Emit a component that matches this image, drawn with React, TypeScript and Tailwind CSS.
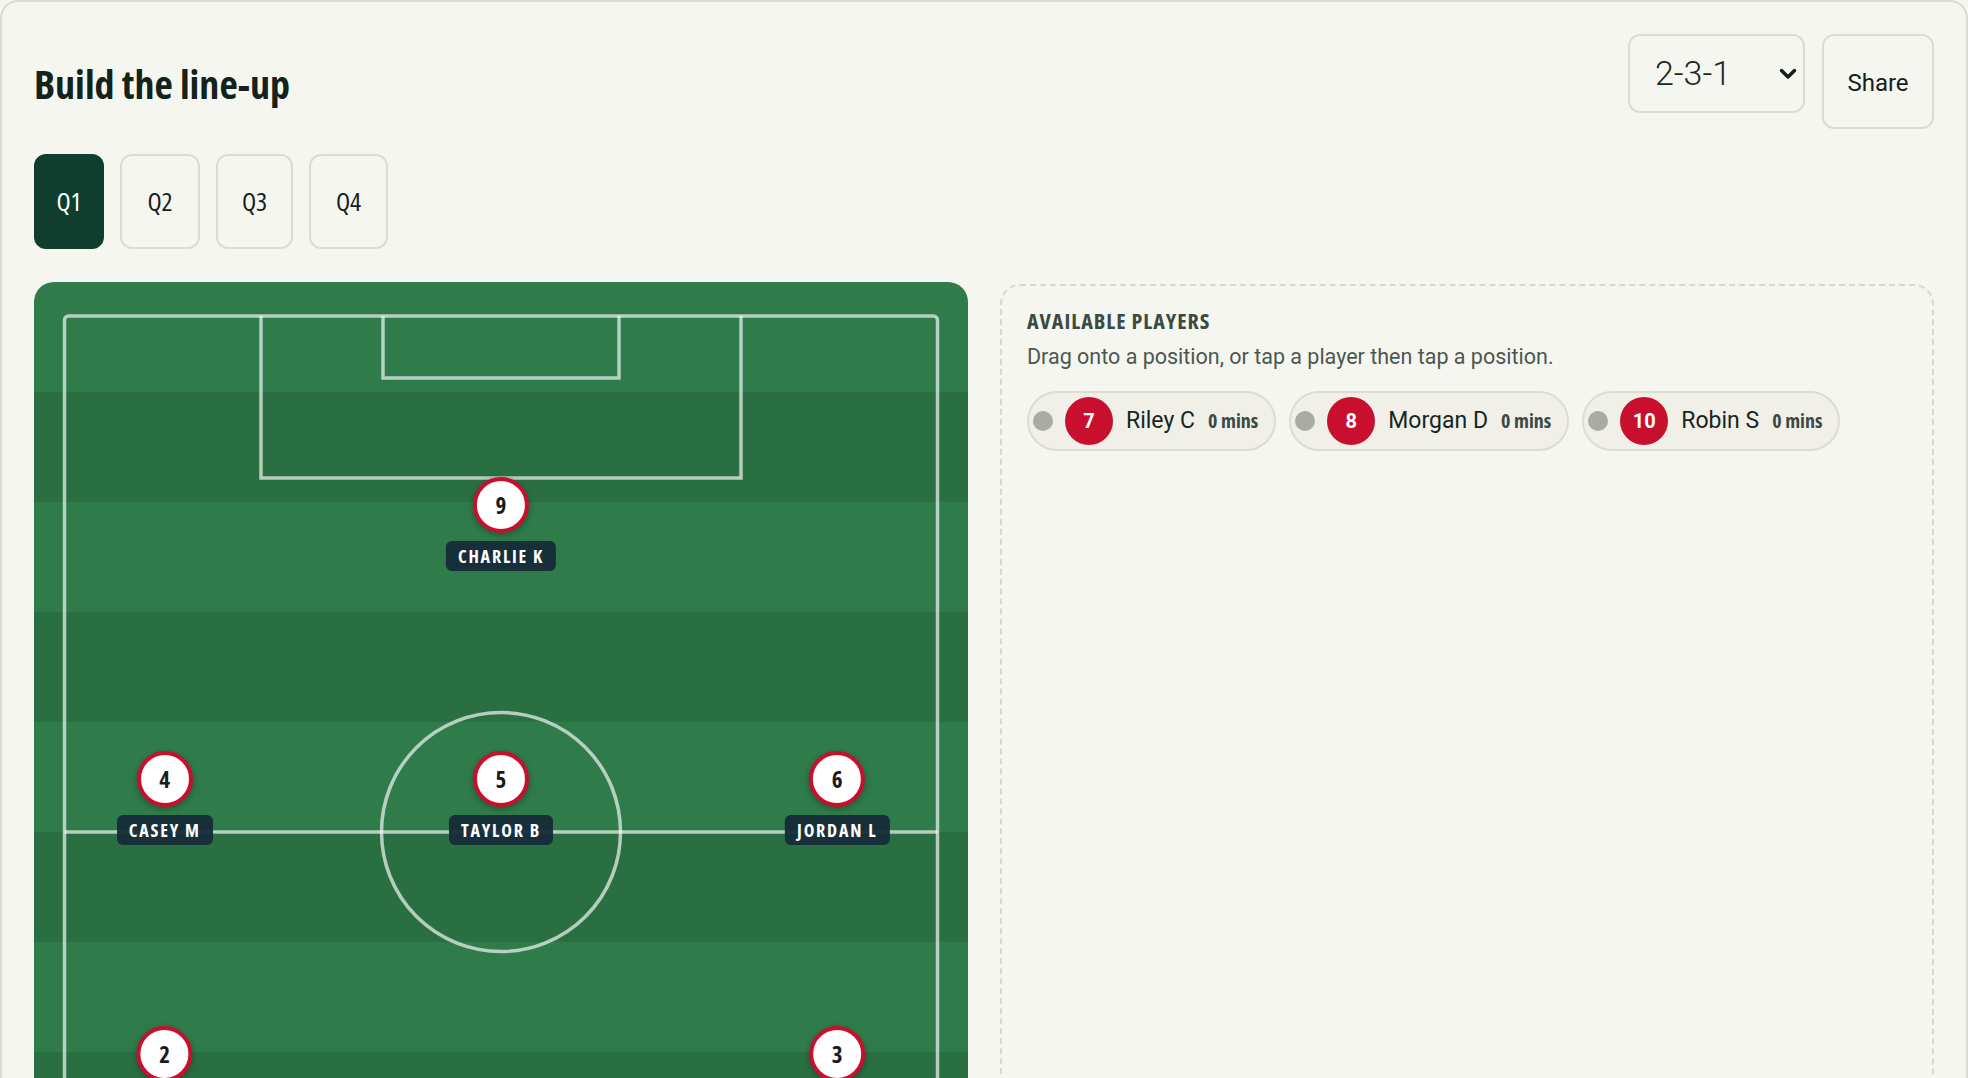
import React from "react";

const COND = "font-['Open_Sans','Liberation_Sans_Narrow',sans-serif] [font-stretch:75%]";
const SANS = "font-['Roboto','Liberation_Sans',sans-serif]";

const tabs = [
  { label: "Q1", w: "w-[70px]", active: true },
  { label: "Q2", w: "w-[80px]", active: false },
  { label: "Q3", w: "w-[77px]", active: false },
  { label: "Q4", w: "w-[79px]", active: false },
];

const players = [
  { n: 9, name: "CHARLIE K", x: 50, y: 20.3 },
  { n: 4, name: "CASEY M", x: 14, y: 45.2 },
  { n: 5, name: "TAYLOR B", x: 50, y: 45.2 },
  { n: 6, name: "JORDAN L", x: 86, y: 45.2 },
  { n: 2, name: "SAM T", x: 14, y: 70.2 },
  { n: 3, name: "JAMIE R", x: 86, y: 70.2 },
  { n: 1, name: "ALEX P", x: 50, y: 90 },
];

const bench = [
  { n: 7, name: "Riley C" },
  { n: 8, name: "Morgan D" },
  { n: 10, name: "Robin S" },
];

const stripes = [0, 1, 2, 3, 4, 5, 6, 7, 8, 9];

function PitchLines() {
  const s = "rgba(255,255,255,0.65)";
  return (
    <svg
      className="absolute inset-0 w-full h-full"
      viewBox="0 0 934 1100"
      preserveAspectRatio="none"
      fill="none"
    >
      <rect x="30.5" y="34" width="873" height="1032" rx="4" stroke={s} strokeWidth="3.5" />
      <path d="M227 34 V196 H707 V34" stroke={s} strokeWidth="3.5" />
      <path d="M349 34 V96 H585 V34" stroke={s} strokeWidth="3.5" />
      <path d="M227 1066 V904 H707 V1066" stroke={s} strokeWidth="3.5" />
      <path d="M349 1066 V1004 H585 V1066" stroke={s} strokeWidth="3.5" />
      <line x1="30.5" y1="550" x2="903.5" y2="550" stroke={s} strokeWidth="3.5" />
      <circle cx="467" cy="550" r="119.5" stroke={s} strokeWidth="3.5" />
    </svg>
  );
}

function Token({ n, name, x, y }: { n: number; name: string; x: number; y: number }) {
  return (
    <div
      className="absolute flex flex-col items-center -translate-x-1/2 -translate-y-[28px]"
      style={{ left: `${x}%`, top: `${y}%` }}
    >
      <div className="w-14 h-14 rounded-full bg-white border-4 border-[#c8102e] flex items-center justify-center shadow-[0_2px_6px_rgba(0,0,0,0.3)]">
        <span className={`${COND} text-[23px] font-bold text-[#1b1b1b] leading-none`}>{n}</span>
      </div>
      <div
        className={`mt-2 h-[30px] px-3 rounded-md bg-[#152b38]/95 flex items-center ${COND} text-[18px] font-bold tracking-[0.1em] text-white whitespace-nowrap`}
      >
        {name}
      </div>
    </div>
  );
}

export default function App() {
  return (
    <div className="min-h-screen bg-[#f6f6f1]">
      <div className="border-2 border-[#dcdcd0] rounded-[18px] bg-[#f6f6f1] px-[32px] pt-[32px] pb-10">
        {/* header */}
        <div className="flex justify-between items-start">
          <h1 className={`${COND} mt-[25px] text-[40px] leading-[50px] font-bold text-[#13221b]`}>
            Build the line-up
          </h1>
          <div className="flex items-start gap-[17px]">
            <div className="w-[177px] h-[79px] rounded-[12px] border-2 border-[#dcdcd0] flex items-center justify-between pl-[25px] pr-[6px]">
              <span className={`${SANS} font-light text-[34px] text-[#1a2a22]`}>2-3-1</span>
              <svg width="18" height="12" viewBox="0 0 18 12" fill="none">
                <path
                  d="M2.5 2.5 L9 9 L15.5 2.5"
                  stroke="#13221b"
                  strokeWidth="3.5"
                  strokeLinecap="round"
                  strokeLinejoin="round"
                />
              </svg>
            </div>
            <button
              className={`w-[112px] h-[95px] rounded-[12px] border-2 border-[#dcdcd0] ${SANS} text-[24px] text-[#13221b] flex items-center justify-center pt-[3px]`}
            >
              Share
            </button>
          </div>
        </div>

        {/* quarter tabs */}
        <div className="mt-[25px] flex gap-4">
          {tabs.map((t) => (
            <div
              key={t.label}
              className={`${t.w} h-[95px] rounded-[12px] border-2 flex items-center justify-center ${COND} text-[26px] ${
                t.active
                  ? "bg-[#103e2e] border-[#103e2e] text-white"
                  : "border-[#dcdcd0] text-[#13221b]"
              }`}
            >
              {t.label}
            </div>
          ))}
        </div>

        {/* main grid */}
        <div className="mt-[33px] grid grid-cols-2 gap-[32px] items-start">
          <div className="relative aspect-[934/1100] rounded-[20px] overflow-hidden">
            <div className="absolute inset-0 flex flex-col">
              {stripes.map((i) => (
                <div key={i} className={`flex-1 ${i % 2 === 0 ? "bg-[#2f7b49]" : "bg-[#2a6f41]"}`} />
              ))}
            </div>
            <PitchLines />
            {players.map((p) => (
              <Token key={p.n} {...p} />
            ))}
          </div>

          <div className="mt-[2px] rounded-[20px] border-2 border-dashed border-[#d8d8cc] px-[25px] pt-[21px] pb-6 min-h-[1000px]">
            <h3
              className={`${COND} font-bold text-[22px] leading-[26px] tracking-[0.045em] text-[#3b4a42] uppercase`}
            >
              Available players
            </h3>
            <p className={`${SANS} mt-[10px] text-[21.5px] leading-[28px] text-[#4b5750]`}>
              Drag onto a position, or tap a player then tap a position.
            </p>
            <div className="mt-[20px] flex flex-wrap gap-[13px]">
              {bench.map((b) => (
                <div
                  key={b.n}
                  className="h-[60px] rounded-full border-2 border-[#dcdcd0] bg-[#f0f0e9] flex items-center pl-[4px] pr-[16px]"
                >
                  <span className="w-5 h-5 rounded-full bg-[#a9aca4]" />
                  <span
                    className={`ml-[12px] w-12 h-12 rounded-full bg-[#c8102e] flex items-center justify-center text-white font-bold text-[20px] ${SANS}`}
                  >
                    {b.n}
                  </span>
                  <span className={`ml-[13px] ${SANS} text-[23px] text-[#17261e]`}>{b.name}</span>
                  <span className={`ml-[13px] ${COND} font-bold text-[20px] text-[#3b4a42]`}>0 mins</span>
                </div>
              ))}
            </div>
          </div>
        </div>
      </div>
    </div>
  );
}
